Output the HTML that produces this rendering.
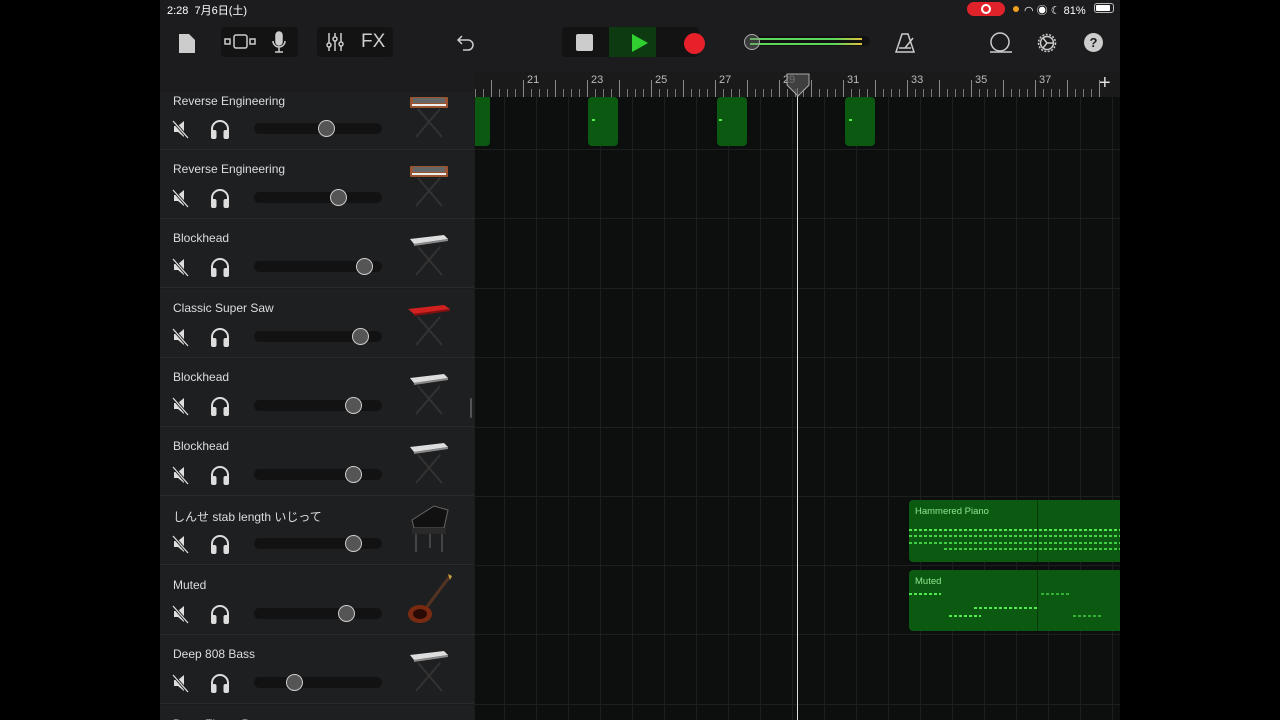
<!DOCTYPE html>
<html><head><meta charset="utf-8"><style>
*{margin:0;padding:0;box-sizing:border-box}
html,body{width:1280px;height:720px;overflow:hidden}
body{background:#000;position:relative;font-family:"Liberation Sans","Noto Sans CJK JP",sans-serif;color:#ddd}
#scr{position:absolute;left:160px;top:0;width:960px;height:720px;background:#1c1c1e;overflow:hidden}
.a{position:absolute}
.grid{left:315px;top:97px;width:645px;height:623px;background-color:#0c0f0e;
background-image:repeating-linear-gradient(90deg,transparent 0 16px,#1b201e 16px 17px,transparent 17px 32px);background-position:13px 0}
.ruler{left:315px;top:72px;width:645px;height:25px;background:#1a1a1a}
.tick{position:absolute;bottom:0;width:1px;height:17px;background:#8a8a8a}
.num{position:absolute;top:2px;font-size:11px;color:#bbb}
.row{position:absolute;left:0;width:314px;height:69px;border-bottom:1px solid #2a2a2c;background:#1e1f21}
.name{position:absolute;left:13px;top:12px;font-size:12px;color:#ddd;white-space:nowrap}
.mute{position:absolute;left:12px;top:39px}
.hp{position:absolute;left:50px;top:38px}
.sl{position:absolute;left:94px;top:42px;width:128px;height:11px;border-radius:6px;background:#121213}
.th{position:absolute;top:-3px;width:17px;height:17px;border-radius:50%;background:#555;border:1.5px solid #ccc;margin-left:-8px}
.inst{position:absolute;left:244px;top:6px;width:50px;height:56px}
.lane{position:absolute;left:315px;width:645px;height:1px;background:#1b1f1e}
.reg{position:absolute;background:#0c5a12;border-radius:4px}
.rt{position:absolute;left:6px;top:6px;font-size:9.5px;color:#8fe58f}
.dots{position:absolute;left:0;height:2px;background-image:repeating-linear-gradient(90deg,#4eea4e 0 3px,transparent 3px 5px)}
</style></head><body>
<div id="scr">
<div class="a" style="left:7px;top:2px;font-size:11px;color:#fff">2:28&nbsp;&nbsp;7月6日(土)</div>
<div class="a" style="left:807px;top:2px;width:38px;height:14px;border-radius:7px;background:#e0232a"><div style="position:absolute;left:14px;top:2px;width:10px;height:10px;border-radius:50%;border:2px solid #fff"></div></div>
<div class="a" style="left:853px;top:6px;width:6px;height:6px;border-radius:50%;background:#f0a020"></div>
<div class="a" style="left:864px;top:2px;font-size:11px;color:#fff">◠ ◉ ☾ 81%</div>
<div class="a" style="left:934px;top:3px;width:20px;height:10px;border:1px solid #bbb;border-radius:3px"><div style="margin:1px;width:14px;height:6px;background:#fff;border-radius:1px"></div></div>
<svg class="a" style="left:18px;top:32px" width="18" height="22"><path d="M1 2 h10 l6 6 v13 h-16z" fill="#ccc"/></svg>
<div class="a" style="left:61px;top:27px;width:77px;height:30px;background:#131314;border-radius:4px"></div>
<svg class="a" style="left:63px;top:33px" width="34" height="18" fill="none" stroke="#ccc" stroke-width="1.5"><rect x="2" y="6" width="5" height="5"/><rect x="11" y="2" width="13" height="13" rx="2"/><rect x="27" y="6" width="5" height="5"/></svg>
<svg class="a" style="left:111px;top:31px" width="16" height="24" fill="none" stroke="#ccc" stroke-width="1.5"><rect x="5" y="1" width="6" height="13" rx="3" fill="#ccc"/><path d="M2 10 a6 6 0 0 0 12 0 M8 16 v5 M4 21 h8"/></svg>
<div class="a" style="left:157px;top:27px;width:76px;height:30px;background:#131314;border-radius:4px"></div>
<svg class="a" style="left:165px;top:32px" width="20" height="20" stroke="#ccc" stroke-width="1.5"><path d="M4 1v18M10 1v18M16 1v18"/><circle cx="4" cy="13" r="2" fill="#131314"/><circle cx="10" cy="7" r="2" fill="#131314"/><circle cx="16" cy="12" r="2" fill="#131314"/></svg>
<div class="a" style="left:201px;top:31px;font-size:19px;color:#ccc">FX</div>
<svg class="a" style="left:296px;top:32px" width="20" height="20" fill="none" stroke="#ccc" stroke-width="1.5"><path d="M6 4 L2 8 L6 12 M2 8 h10 a5 5 0 0 1 0 10 h-5"/></svg>
<div class="a" style="left:402px;top:27px;width:137px;height:30px;background:#131314;border-radius:4px"></div>
<div class="a" style="left:449px;top:27px;width:47px;height:30px;background:#0e3a12"></div>
<div class="a" style="left:416px;top:34px;width:17px;height:17px;background:#ccc;border-radius:2px"></div>
<svg class="a" style="left:471px;top:33px" width="18" height="20"><path d="M1 1 L17 10 L1 19z" fill="#30d030"/></svg>
<div class="a" style="left:524px;top:33px;width:21px;height:21px;border-radius:50%;background:#e8202a"></div>
<div class="a" style="left:585px;top:36px;width:125px;height:10px;border-radius:5px;background:#111"></div>
<div class="a" style="left:590px;top:38px;width:112px;height:2px;background:linear-gradient(90deg,#5cd65c 75%,#e0c040)"></div>
<div class="a" style="left:590px;top:43px;width:112px;height:2px;background:linear-gradient(90deg,#5cd65c 75%,#e0c040)"></div>
<div class="a" style="left:584px;top:34px;width:16px;height:16px;border-radius:50%;border:1.5px solid #aaa;background:rgba(120,120,120,.4)"></div>
<svg class="a" style="left:734px;top:32px" width="22" height="22" fill="none" stroke="#ccc" stroke-width="1.5"><path d="M8 2 h6 l6 18 h-18z M5 16 h12 M11 16 L19 6"/></svg>
<svg class="a" style="left:829px;top:32px" width="24" height="22" fill="none" stroke="#ccc" stroke-width="1.5"><circle cx="11" cy="10" r="9"/><path d="M1 20 h22"/></svg>
<svg class="a" style="left:876px;top:32px" width="22" height="22" fill="none" stroke="#ccc" stroke-width="1.5"><circle cx="11" cy="11" r="8.5" stroke-dasharray="2 1.5"/><circle cx="11" cy="11" r="6.5"/><path d="M11 11 L17 11 M11 11 L7 6 M11 11 L7 16"/></svg>
<div class="a" style="left:924px;top:33px;width:19px;height:19px;border-radius:50%;background:#ccc;color:#1c1c1e;font-size:13px;font-weight:bold;text-align:center;line-height:19px">?</div>
<div class="a ruler">
<div style="position:absolute;left:0;bottom:0;width:630px;height:8px;background-image:repeating-linear-gradient(90deg,#777 0 1px,transparent 1px 8px)"></div>
<div class="tick" style="left:16px"></div><div class="tick" style="left:48px"></div><div class="tick" style="left:80px"></div><div class="tick" style="left:112px"></div><div class="tick" style="left:144px"></div><div class="tick" style="left:176px"></div><div class="tick" style="left:208px"></div><div class="tick" style="left:240px"></div><div class="tick" style="left:272px"></div><div class="tick" style="left:304px"></div><div class="tick" style="left:336px"></div><div class="tick" style="left:368px"></div><div class="tick" style="left:400px"></div><div class="tick" style="left:432px"></div><div class="tick" style="left:464px"></div><div class="tick" style="left:496px"></div><div class="tick" style="left:528px"></div><div class="tick" style="left:560px"></div><div class="tick" style="left:592px"></div><div class="tick" style="left:624px"></div>
<span class="num" style="left:52px">21</span><span class="num" style="left:116px">23</span><span class="num" style="left:180px">25</span><span class="num" style="left:244px">27</span><span class="num" style="left:308px">29</span><span class="num" style="left:372px">31</span><span class="num" style="left:436px">33</span><span class="num" style="left:500px">35</span><span class="num" style="left:564px">37</span>
<span style="position:absolute;left:624px;top:0;font-size:20px;color:#ddd">+</span>
</div>
<div class="a grid"></div>
<div class="lane" style="top:149px"></div><div class="lane" style="top:218px"></div><div class="lane" style="top:288px"></div><div class="lane" style="top:357px"></div><div class="lane" style="top:427px"></div><div class="lane" style="top:496px"></div><div class="lane" style="top:565px"></div><div class="lane" style="top:634px"></div><div class="lane" style="top:704px"></div>
<div class="reg" style="left:315px;top:97px;width:15px;height:49px;border-radius:0 0 4px 0"></div>
<div class="reg" style="left:428px;top:97px;width:30px;height:49px"><div style="position:absolute;left:4px;top:22px;width:3px;height:2px;background:#4eea4e"></div></div>
<div class="reg" style="left:557px;top:97px;width:30px;height:49px"><div style="position:absolute;left:2px;top:22px;width:3px;height:2px;background:#4eea4e"></div></div>
<div class="reg" style="left:685px;top:97px;width:30px;height:49px"><div style="position:absolute;left:4px;top:22px;width:3px;height:2px;background:#4eea4e"></div></div>
<div class="reg" style="left:749px;top:500px;width:211px;height:62px;border-radius:4px 0 0 4px">
<div class="rt">Hammered Piano</div>
<div class="dots" style="top:29px;width:211px"></div><div class="dots" style="top:35px;width:211px;opacity:.85"></div><div class="dots" style="top:42px;width:211px;opacity:.8"></div><div class="dots" style="top:48px;left:35px;width:176px;opacity:.8"></div>
<div style="position:absolute;left:128px;top:0;width:1px;height:62px;background:#073a0a"></div></div>
<div class="reg" style="left:749px;top:570px;width:211px;height:61px;border-radius:4px 0 0 4px">
<div class="rt">Muted</div>
<div class="dots" style="top:23px;width:32px"></div><div class="dots" style="top:23px;left:132px;width:30px;opacity:.6"></div>
<div class="dots" style="top:37px;left:65px;width:65px"></div><div class="dots" style="top:45px;left:40px;width:32px"></div><div class="dots" style="top:45px;left:164px;width:30px;opacity:.6"></div>
<div style="position:absolute;left:128px;top:0;width:1px;height:61px;background:#073a0a"></div></div>
<div class="a" style="left:637px;top:88px;width:1px;height:632px;background:#ddd"></div>
<svg class="a" style="left:626px;top:73px" width="24" height="24"><path d="M1 1 h22 v11 l-11 11 l-11 -11z" fill="rgba(80,80,80,.7)" stroke="#aaa"/></svg>

<div class="row" style="top:81px"><div class="name" style="top:13px">Reverse Engineering</div>
<svg class="mute" width="18" height="20"><path d="M2 6 h4 l6 -5 v16 l-6 -5 h-4z" fill="#ddd"/><path d="M1 1 L16 18" stroke="#1e1f21" stroke-width="3"/><path d="M1 1 L16 18" stroke="#ddd" stroke-width="1.3"/></svg>
<svg class="hp" width="20" height="22" fill="none" stroke="#ddd" stroke-width="2"><path d="M2 14 v-4 a8 8 0 0 1 16 0 v4"/><rect x="2" y="12" width="3.5" height="7" rx="1" fill="#ddd"/><rect x="14.5" y="12" width="3.5" height="7" rx="1" fill="#ddd"/></svg>
<div class="sl"><div class="th" style="left:72px"></div></div>
<svg class="inst" viewBox="0 0 50 56"><rect x="6" y="10" width="38" height="11" rx="1" fill="#9a5530"/><rect x="9" y="11" width="32" height="5" fill="#666"/><rect x="8" y="17" width="34" height="2" fill="#eee"/><path d="M14 22 L38 50 M36 22 L12 50" stroke="#333" stroke-width="2"/></svg></div>

<div class="row" style="top:150px"><div class="name">Reverse Engineering</div>
<svg class="mute" width="18" height="20"><path d="M2 6 h4 l6 -5 v16 l-6 -5 h-4z" fill="#ddd"/><path d="M1 1 L16 18" stroke="#1e1f21" stroke-width="3"/><path d="M1 1 L16 18" stroke="#ddd" stroke-width="1.3"/></svg>
<svg class="hp" width="20" height="22" fill="none" stroke="#ddd" stroke-width="2"><path d="M2 14 v-4 a8 8 0 0 1 16 0 v4"/><rect x="2" y="12" width="3.5" height="7" rx="1" fill="#ddd"/><rect x="14.5" y="12" width="3.5" height="7" rx="1" fill="#ddd"/></svg>
<div class="sl"><div class="th" style="left:84px"></div></div>
<svg class="inst" viewBox="0 0 50 56"><rect x="6" y="10" width="38" height="11" rx="1" fill="#9a5530"/><rect x="9" y="11" width="32" height="5" fill="#666"/><rect x="8" y="17" width="34" height="2" fill="#eee"/><path d="M14 22 L38 50 M36 22 L12 50" stroke="#333" stroke-width="2"/></svg></div>

<div class="row" style="top:219px"><div class="name">Blockhead</div>
<svg class="mute" width="18" height="20"><path d="M2 6 h4 l6 -5 v16 l-6 -5 h-4z" fill="#ddd"/><path d="M1 1 L16 18" stroke="#1e1f21" stroke-width="3"/><path d="M1 1 L16 18" stroke="#ddd" stroke-width="1.3"/></svg>
<svg class="hp" width="20" height="22" fill="none" stroke="#ddd" stroke-width="2"><path d="M2 14 v-4 a8 8 0 0 1 16 0 v4"/><rect x="2" y="12" width="3.5" height="7" rx="1" fill="#ddd"/><rect x="14.5" y="12" width="3.5" height="7" rx="1" fill="#ddd"/></svg>
<div class="sl"><div class="th" style="left:110px"></div></div>
<svg class="inst" viewBox="0 0 50 56"><path d="M6 14 L40 10 L44 14 L10 19z" fill="#ddd"/><path d="M10 19 L44 14 v2 L10 21z" fill="#888"/><path d="M14 22 L38 50 M36 22 L12 50" stroke="#333" stroke-width="2"/></svg></div>

<div class="row" style="top:289px"><div class="name">Classic Super Saw</div>
<svg class="mute" width="18" height="20"><path d="M2 6 h4 l6 -5 v16 l-6 -5 h-4z" fill="#ddd"/><path d="M1 1 L16 18" stroke="#1e1f21" stroke-width="3"/><path d="M1 1 L16 18" stroke="#ddd" stroke-width="1.3"/></svg>
<svg class="hp" width="20" height="22" fill="none" stroke="#ddd" stroke-width="2"><path d="M2 14 v-4 a8 8 0 0 1 16 0 v4"/><rect x="2" y="12" width="3.5" height="7" rx="1" fill="#ddd"/><rect x="14.5" y="12" width="3.5" height="7" rx="1" fill="#ddd"/></svg>
<div class="sl"><div class="th" style="left:106px"></div></div>
<svg class="inst" viewBox="0 0 50 56"><path d="M4 14 L40 10 L46 14 L10 19z" fill="#d02020"/><path d="M10 19 L46 14 v2 L10 21z" fill="#801010"/><path d="M14 22 L38 50 M36 22 L12 50" stroke="#333" stroke-width="2"/></svg></div>

<div class="row" style="top:358px"><div class="name">Blockhead</div>
<svg class="mute" width="18" height="20"><path d="M2 6 h4 l6 -5 v16 l-6 -5 h-4z" fill="#ddd"/><path d="M1 1 L16 18" stroke="#1e1f21" stroke-width="3"/><path d="M1 1 L16 18" stroke="#ddd" stroke-width="1.3"/></svg>
<svg class="hp" width="20" height="22" fill="none" stroke="#ddd" stroke-width="2"><path d="M2 14 v-4 a8 8 0 0 1 16 0 v4"/><rect x="2" y="12" width="3.5" height="7" rx="1" fill="#ddd"/><rect x="14.5" y="12" width="3.5" height="7" rx="1" fill="#ddd"/></svg>
<div class="sl"><div class="th" style="left:99px"></div></div>
<svg class="inst" viewBox="0 0 50 56"><path d="M6 14 L40 10 L44 14 L10 19z" fill="#ddd"/><path d="M10 19 L44 14 v2 L10 21z" fill="#888"/><path d="M14 22 L38 50 M36 22 L12 50" stroke="#333" stroke-width="2"/></svg></div>

<div class="row" style="top:427px"><div class="name">Blockhead</div>
<svg class="mute" width="18" height="20"><path d="M2 6 h4 l6 -5 v16 l-6 -5 h-4z" fill="#ddd"/><path d="M1 1 L16 18" stroke="#1e1f21" stroke-width="3"/><path d="M1 1 L16 18" stroke="#ddd" stroke-width="1.3"/></svg>
<svg class="hp" width="20" height="22" fill="none" stroke="#ddd" stroke-width="2"><path d="M2 14 v-4 a8 8 0 0 1 16 0 v4"/><rect x="2" y="12" width="3.5" height="7" rx="1" fill="#ddd"/><rect x="14.5" y="12" width="3.5" height="7" rx="1" fill="#ddd"/></svg>
<div class="sl"><div class="th" style="left:99px"></div></div>
<svg class="inst" viewBox="0 0 50 56"><path d="M6 14 L40 10 L44 14 L10 19z" fill="#ddd"/><path d="M10 19 L44 14 v2 L10 21z" fill="#888"/><path d="M14 22 L38 50 M36 22 L12 50" stroke="#333" stroke-width="2"/></svg></div>

<div class="row" style="top:496px"><div class="name">しんせ stab length いじって</div>
<svg class="mute" width="18" height="20"><path d="M2 6 h4 l6 -5 v16 l-6 -5 h-4z" fill="#ddd"/><path d="M1 1 L16 18" stroke="#1e1f21" stroke-width="3"/><path d="M1 1 L16 18" stroke="#ddd" stroke-width="1.3"/></svg>
<svg class="hp" width="20" height="22" fill="none" stroke="#ddd" stroke-width="2"><path d="M2 14 v-4 a8 8 0 0 1 16 0 v4"/><rect x="2" y="12" width="3.5" height="7" rx="1" fill="#ddd"/><rect x="14.5" y="12" width="3.5" height="7" rx="1" fill="#ddd"/></svg>
<div class="sl"><div class="th" style="left:99px"></div></div>
<svg class="inst" viewBox="0 0 50 56"><path d="M8 18 L30 4 L44 8 L40 26 L10 26z" fill="#111" stroke="#666"/><path d="M8 26 h34 v6 h-34z" fill="#2a2a2a"/><path d="M12 32 v18 M38 32 v18 M26 32 v14" stroke="#444" stroke-width="2"/></svg></div>

<div class="row" style="top:566px"><div class="name">Muted</div>
<svg class="mute" width="18" height="20"><path d="M2 6 h4 l6 -5 v16 l-6 -5 h-4z" fill="#ddd"/><path d="M1 1 L16 18" stroke="#1e1f21" stroke-width="3"/><path d="M1 1 L16 18" stroke="#ddd" stroke-width="1.3"/></svg>
<svg class="hp" width="20" height="22" fill="none" stroke="#ddd" stroke-width="2"><path d="M2 14 v-4 a8 8 0 0 1 16 0 v4"/><rect x="2" y="12" width="3.5" height="7" rx="1" fill="#ddd"/><rect x="14.5" y="12" width="3.5" height="7" rx="1" fill="#ddd"/></svg>
<div class="sl"><div class="th" style="left:92px"></div></div>
<svg class="inst" viewBox="0 0 50 56"><path d="M22 36 L46 4" stroke="#553322" stroke-width="3"/><path d="M44 2 l4 2 l-2 4z" fill="#c9a040"/><ellipse cx="16" cy="42" rx="12" ry="9" fill="#7a2a10"/><ellipse cx="16" cy="42" rx="7" ry="5" fill="#2a0a05"/></svg></div>

<div class="row" style="top:635px"><div class="name">Deep 808 Bass</div>
<svg class="mute" width="18" height="20"><path d="M2 6 h4 l6 -5 v16 l-6 -5 h-4z" fill="#ddd"/><path d="M1 1 L16 18" stroke="#1e1f21" stroke-width="3"/><path d="M1 1 L16 18" stroke="#ddd" stroke-width="1.3"/></svg>
<svg class="hp" width="20" height="22" fill="none" stroke="#ddd" stroke-width="2"><path d="M2 14 v-4 a8 8 0 0 1 16 0 v4"/><rect x="2" y="12" width="3.5" height="7" rx="1" fill="#ddd"/><rect x="14.5" y="12" width="3.5" height="7" rx="1" fill="#ddd"/></svg>
<div class="sl"><div class="th" style="left:40px"></div></div>
<svg class="inst" viewBox="0 0 50 56"><path d="M6 14 L40 10 L44 14 L10 19z" fill="#ddd"/><path d="M10 19 L44 14 v2 L10 21z" fill="#888"/><path d="M14 22 L38 50 M36 22 L12 50" stroke="#333" stroke-width="2"/></svg></div>

<div class="row" style="top:705px;height:15px;border-bottom:none;overflow:hidden"><div class="name">Deep Flavor Bass</div></div>
<div class="a" style="left:0;top:72px;width:314px;height:20px;background:#1c1c1e"></div>
<div class="a" style="left:310px;top:398px;width:2px;height:20px;background:#555;border-radius:1px"></div>
</div>
</body></html>
